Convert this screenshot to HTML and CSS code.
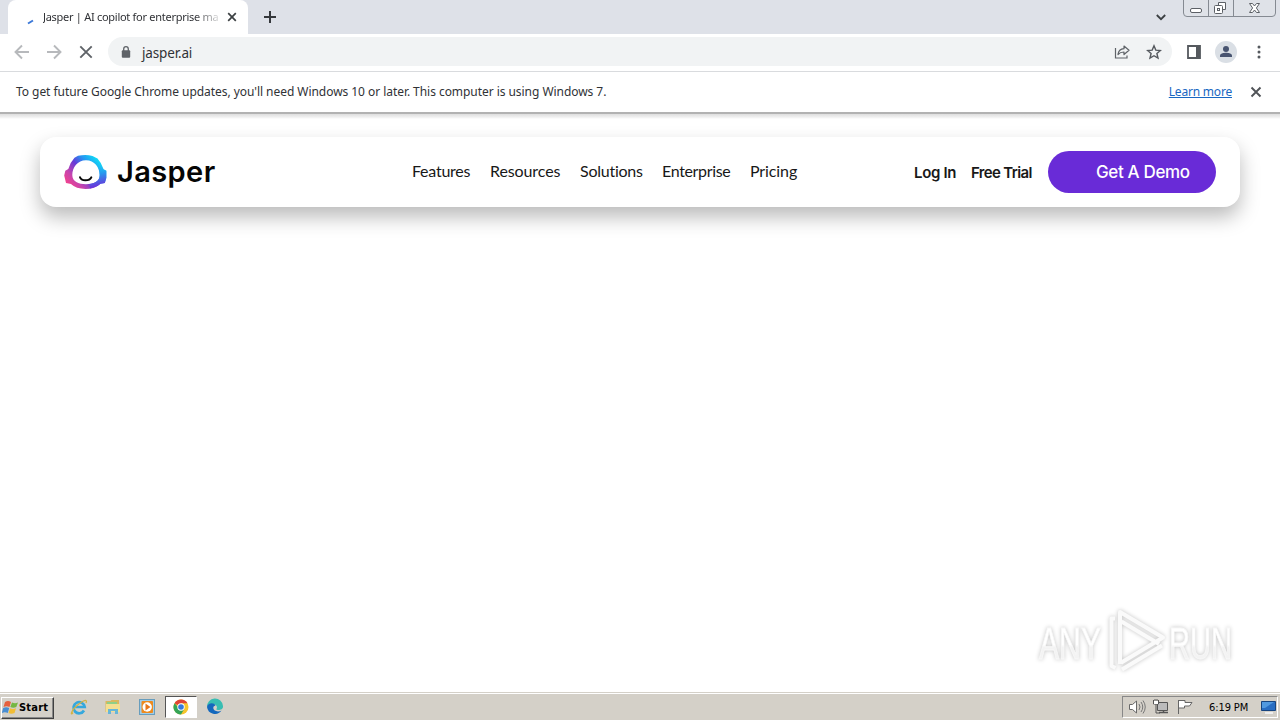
FILE: index.html
```html
<!DOCTYPE html>
<html lang="en">
<head>
<meta charset="utf-8">
<title>Jasper | AI copilot for enterprise marketing</title>
<link rel="stylesheet" href="styles.css">
</head>
<body>
<div class="desktop">
  <header class="tabstrip">
    <div class="tab">
      <svg class="spinner" width="16" height="16" viewBox="0 0 16 16"><path d="M5 9.500 10 6.500" stroke="#3b78d8" stroke-width="2" fill="none"/></svg>
      <span class="tab-title">Jasper | AI copilot for enterprise ma</span>
      <svg class="tab-close" width="10" height="10" viewBox="0 0 10 10"><path d="M1.2 1.2 8.8 8.8M8.8 1.2 1.2 8.8" stroke="#3c4043" stroke-width="1.7"/></svg>
    </div>
    <svg class="new-tab" width="12" height="12" viewBox="0 0 12 12"><path d="M6 0v12M0 6h12" stroke="#35383c" stroke-width="2"/></svg>
    <svg class="chevron" width="10" height="7" viewBox="0 0 10 7"><path d="M.8 1 5 5.2 9.2 1" fill="none" stroke="#3c4043" stroke-width="1.8"/></svg>
    <svg class="window-controls" width="94" height="18" viewBox="0 0 94 18">
      <path d="M.5 0v13q0 3.500 3.500 3.500h85q3.500 0 3.500-3.500V0M25.500 0v16.500M50.500 0v16.500" fill="#dfe2e8" stroke="#858a92"/>
      <rect x="7.500" y="8.500" width="11" height="4" rx="1.500" fill="#fff" stroke="#5c6066"/>
      <path d="M35.500 2.500h7v7h-7z" fill="#fff" stroke="#5c6066"/><rect x="31.500" y="5.500" width="8" height="8" rx="1" fill="#fff" stroke="#5c6066"/><rect x="34.500" y="8.500" width="2" height="2" fill="none" stroke="#5c6066"/>
      <path d="M66.500 3.500h3l2 2.500 2-2.500h3L73.400 8l3.100 4.500h-3l-2-2.500-2 2.500h-3L69.600 8z" fill="#fff" stroke="#5c6066"/>
    </svg>
  </header>

  <div class="toolbar">
    <svg class="tool" width="16" height="16" viewBox="0 0 16 16"><path d="M15 8H2M8 1.500 1.500 8 8 14.500" fill="none" stroke="#b7b9bc" stroke-width="1.900"/></svg>
    <svg class="tool" width="16" height="16" viewBox="0 0 16 16"><path d="M1 8h13M8 1.500 14.500 8 8 14.500" fill="none" stroke="#b7b9bc" stroke-width="1.900"/></svg>
    <svg class="tool" width="16" height="16" viewBox="0 0 16 16"><path d="M2.300 2.300 13.700 13.700M13.700 2.300 2.300 13.700" stroke="#5f6368" stroke-width="1.900"/></svg>
    <div class="omnibox">
      <svg width="10" height="12" viewBox="0 0 10 12"><rect x=".8" y="4.300" width="8.400" height="7.400" rx="1" fill="#5f6368"/><path d="M2.700 5V3a2.300 2.300 0 0 1 4.600 0v2" fill="none" stroke="#5f6368" stroke-width="1.300"/></svg>
      <span class="url">jasper.ai</span>
      <svg class="share" width="16" height="16" viewBox="0 0 16 16"><path d="M1.500 4v10h11.500v-2.500" fill="none" stroke="#5f6368" stroke-width="1.200"/><path d="M4 10.500C4.500 6.500 6.500 5 10 4.700V2l5 4.300-5 4.200V8C7.500 8 5.500 8.700 4 10.500z" fill="none" stroke="#5f6368" stroke-width="1.200" stroke-linejoin="round"/></svg>
      <svg class="star" width="16" height="16" viewBox="0 0 16 16"><path d="m8 1.800 1.800 4.300 4.600.4-3.500 3 1.100 4.600L8 11.700l-4 2.400 1.100-4.600-3.500-3 4.600-.4z" fill="none" stroke="#55595e" stroke-width="1.400"/></svg>
    </div>
    <svg class="panel-icon" width="14" height="14" viewBox="0 0 14 14"><path d="M1 1h12v12H1z" fill="#fff" stroke="#55595e" stroke-width="1.800"/><path d="M9 1h4v12H9z" fill="#55595e"/></svg>
    <svg class="avatar" width="22" height="22" viewBox="0 0 22 22"><circle cx="11" cy="11" r="11" fill="#dadfe5"/><circle cx="11" cy="8" r="3" fill="#485470"/><path d="M5 16v-1.300c0-2.200 3.500-3 6-3s6 .8 6 3V16z" fill="#485470"/></svg>
    <svg class="dots" width="4" height="14" viewBox="0 0 4 14"><g fill="#55595e"><circle cx="2" cy="2" r="1.500"/><circle cx="2" cy="7" r="1.500"/><circle cx="2" cy="12" r="1.500"/></g></svg>
  </div>

  <div class="infobar">
    <span class="notice">To get future Google Chrome updates, you'll need Windows 10 or later. This computer is using Windows 7.</span>
    <a class="learn">Learn more</a>
    <svg width="12" height="12" viewBox="0 0 12 12"><path d="M1.500 1.500 10.500 10.500M10.500 1.500 1.500 10.500" stroke="#505357" stroke-width="1.900"/></svg>
  </div>

  <main class="page">
    <nav class="navbar">
      <svg class="logo" width="44" height="36" viewBox="0 0 44 36">
        <defs><linearGradient id="halo" x1="5" y1="32" x2="34" y2="5" gradientUnits="userSpaceOnUse"><stop offset="0" stop-color="#f5428a"/><stop offset=".24" stop-color="#c844ad"/><stop offset=".53" stop-color="#643bd8"/><stop offset=".75" stop-color="#2694f2"/><stop offset="1" stop-color="#10d8f5"/></linearGradient>
        <linearGradient id="side" x1="30" y1="10" x2="34" y2="31" gradientUnits="userSpaceOnUse"><stop offset="0" stop-color="#20c5f5" stop-opacity="0"/><stop offset=".45" stop-color="#2898ee"/><stop offset="1" stop-color="#6737db"/></linearGradient></defs>
        <path fill-rule="evenodd" fill="url(#halo)" d="M14 .8Q22-.8 28.500 1l5 2.600Q37.500 8 39.500 14.200l2.800 1.600v7.200l-1.500 5-4.300.8Q31 34 21.500 34T7 29.100l-5-1L.2 20.500 1.300 15.800l3-1.700Q6 7.500 10.500 2.700zM22 5.200C13.500 5.200 8.300 12.500 8.300 20c0 6.700 6.200 9.200 13.700 9.200S35.700 26.700 35.700 20C35.700 12.500 30.500 5.200 22 5.200z"/>
        <path fill="url(#side)" d="M33.500 3.600Q37.500 8 39.500 14.200l2.800 1.600v7.200l-1.500 5-4.300.8Q33 32 26 33.500l-.5-4.500c6.700-.9 10.200-3.300 10.200-9 0-5.200-2.600-10.500-7-13.300z"/>
        <path d="M16 22.300c1.200 4 9.500 4 11.300 0" fill="none" stroke="#080808" stroke-width="2" stroke-linecap="round"/>
      </svg>
      <span class="brand">Jasper</span>
      <div class="menu"><span class="m1">Features</span><span class="m2">Resources</span><span class="m3">Solutions</span><span class="m4">Enterprise</span><span class="m5">Pricing</span></div>
      <div class="account"><span class="login">Log In</span><span class="trial">Free Trial</span></div>
      <a class="demo"><span>Get A Demo</span></a>
    </nav>
    <svg class="watermark" width="216" height="72" viewBox="0 0 216 72">
      <defs><linearGradient id="mark" x1="0" y1="0" x2="0" y2="1"><stop offset=".52" stop-color="#fff"/><stop offset=".58" stop-color="#f3f3f3"/></linearGradient></defs>
      <g class="watermark-type"><text x="7" y="54" textLength="62" lengthAdjust="spacingAndGlyphs">ANY</text><text x="137" y="54" textLength="63" lengthAdjust="spacingAndGlyphs">RUN</text></g>
      <g class="watermark-play"><path d="M83 13.500h-3.500V61l4 2"/><path d="m88 59V7l43 25.500-42 25.300M89.500 16.500 127 39M90 64.500l40-24"/></g>
    </svg>
  </main>

  <footer class="taskbar">
    <div class="start"><svg width="17" height="17" viewBox="0 0 17 17"><path d="M3 3q3-2 6 0L7.500 8q-3-1.500-6 0z" fill="#e6603d"/><path d="M10 3.500q3 1.500 6 0L14.300 8q-3 1.500-6 .1z" fill="#75b742"/><path d="M1.200 9q3-1.500 6 0L5.800 14q-3-1.500-6 0z" fill="#498ed2"/><path d="M8 9.200q3 1.500 6 0L12.500 14q-3 1.500-6 .1z" fill="#f2bd35"/></svg><span>Start</span></div>
    <div class="quick">
      <svg width="18" height="18" viewBox="0 0 18 18"><path d="M14 12.500A5.600 5.600 0 1 1 14.700 9H5" fill="none" stroke="#35a8dd" stroke-width="2.700"/><path d="M3 14.500c-3 4-2-2 4-7s11-7 9-2.500" fill="none" stroke="#d3b344" stroke-width="1.300"/></svg>
      <svg width="18" height="18" viewBox="0 0 18 18"><path d="M1.500 3h5l1-1H15v12H1.500z" fill="#d9b85e"/><path d="M3 4h10v3H3z" fill="#8fcf88"/><path d="M2 6h14v8H2z" fill="#f4df91"/><path d="M4 16v-5h10v5h-3v-3H7v3z" fill="#67b6d8"/></svg>
      <svg width="18" height="18" viewBox="0 0 18 18"><rect x="1.500" y="1.500" width="15" height="15" fill="#9fcdea" stroke="#679dbd"/><rect x="3.500" y="3" width="11.500" height="12" rx="1" fill="#ed8a1e"/><circle cx="9.200" cy="9" r="4.700" fill="#fff"/><path d="m7.500 5.500 5 3.500-5 3.500z" fill="#e8761a"/></svg>
      <div class="active"><svg width="18" height="18" viewBox="0 0 18 18"><circle cx="9" cy="9" r="7.500" fill="#f6c52c"/><path d="M9 9 2.500 5.200A7.500 7.500 0 0 1 15.500 5.200H9z" fill="#df4436"/><path d="M2.500 5.200A7.500 7.500 0 0 0 9 16.500L12.200 11 9 9H6z" fill="#34a457"/><circle cx="9" cy="9" r="3.700" fill="#fff"/><circle cx="9" cy="9" r="2.800" fill="#3579dc"/></svg></div>
      <svg width="18" height="18" viewBox="0 0 18 18"><path d="M1 9a8 8 0 0 1 16-1c.3 3-2 4-5 4-2 0-2-1-1-2 0-3-2-4-4.500-4C3.500 6 1.500 7 1 9z" fill="#38bdb2"/><path d="M1 9c.5-4 7-5 8.500-1.500C6 8 6.500 13 12 13.500q2 0 3.500-1A8 8 0 0 1 1 9z" fill="#1468bd"/></svg>
    </div>
    <div class="tray">
      <svg width="18" height="18" viewBox="0 0 18 18"><path d="M1.500 6.500h3l4-3.500v12l-4-3.500h-3z" fill="#fff" stroke="#686868"/><path d="M11 6q2 3 0 6M13 4q3.500 5 0 10M15 2.500q4.500 6.500 0 13" fill="none" stroke="#777"/></svg>
      <svg width="18" height="18" viewBox="0 0 18 18"><path d="M5.500 4.500h10v8h-10z" fill="#bbb" stroke="#555"/><path d="M7 14.500h9M11.500 13v2" stroke="#555" stroke-width="1.500"/><path d="M1.500 2v4h5V2M4 6v9h4M3 1v2M5 1v2" fill="none" stroke="#555"/><path d="M2 3h4v3H2z" fill="#fff"/></svg>
      <svg width="18" height="18" viewBox="0 0 18 18"><path d="M2.500 2v14M3 2.500h6v2h7l-2.500 3.500H8.500v2H3" fill="#fff" stroke="#666"/></svg>
      <span class="clock">6:19 PM</span>
      <svg class="show-desktop" width="16" height="16" viewBox="0 0 16 16"><path d="M1.500 2.500h14v9h-14z" fill="#286dc2" stroke="#174580"/><path d="M2 3h12L5 9H2z" fill="#5199df"/><path d="M5 14h8" stroke="#eee" stroke-width="2"/></svg>
    </div>
  </footer>
</div>
</body>
</html>
```
FILE: styles.css
```css
*{box-sizing:border-box}
body{margin:0;font-family:"Noto Sans","DejaVu Sans",sans-serif;color:#303236}
svg{display:block;flex-shrink:0}
.desktop{width:1280px;height:720px;overflow:hidden;display:grid;grid-template-columns:1280px;grid-template-rows:34px 38px 42px 578px 28px;background:#fff}
.tabstrip{display:flex;background:#dee1e8;padding-left:8px}
.tab{width:240px;background:#fff;border-radius:8px 8px 0 0;display:flex;align-items:center;padding-left:15px}
.spinner{margin-top:10px}
.tab-title{width:176px;margin:-2px 0 0 4px;white-space:nowrap;font-size:11px;letter-spacing:-.28px;-webkit-mask-image:linear-gradient(90deg,#000 86%,rgba(0,0,0,.15));mask-image:linear-gradient(90deg,#000 86%,rgba(0,0,0,.15))}
.tab-close{margin-left:8px}
.new-tab{margin:11px 0 0 16px}
.chevron{margin:14px 0 0 auto}
.window-controls{margin:0 3px 0 17px}
.toolbar{display:flex;align-items:center;padding:0 19px 2px 14px;border-bottom:1px solid #d9dbde;gap:16px}
.omnibox{flex:1;height:29px;margin-left:-2px;background:#f1f3f4;border-radius:15px;display:flex;align-items:center;padding:0 10px 0 13px}
.url{font-size:13.5px;margin:2px 0 0 11px;letter-spacing:-.15px}
.share{margin-left:auto}
.star{margin-left:16px}
.panel-icon{margin-left:-1px}
.avatar{margin-left:-2px}
.dots{margin-left:4px}
.infobar{display:flex;align-items:center;padding:0 18px 1px 16px;border-bottom:2px solid #b2b2b2;font-size:12px}
.notice{white-space:nowrap;letter-spacing:-.05px}
.learn{margin-left:auto;margin-right:18px;color:#1967c2;text-decoration:underline;letter-spacing:-.2px}
.page{padding:23px 40px 0;background:linear-gradient(#dedede 0,#efefef 3px,#fff 5px);position:relative}
.navbar{height:70px;border-radius:16px;background:#fff;box-shadow:0 10px 20px rgba(0,0,0,.27);display:flex;align-items:center;padding:0 24px;color:#181818}
.logo{margin-top:2px}
.brand{font:600 29px Inter,sans-serif;color:#050505;margin:-2px 0 0 9px;width:99px;letter-spacing:.4px}
.menu{display:flex;gap:20px;margin:-3px 0 0 196px;font:16px Lato,sans-serif;letter-spacing:-.25px;white-space:nowrap}
.m1{width:58px}.m2{width:70px;letter-spacing:-.1px}.m3{width:62px}.m4{width:68px;letter-spacing:-.35px}.m5{width:47px;letter-spacing:-.1px}
.account{display:flex;gap:15px;margin:0 0 0 117px;font:600 15px Inter,sans-serif;white-space:nowrap}
.login{width:42px;letter-spacing:-.35px}.trial{width:61px;letter-spacing:-.65px}
.demo{width:168px;height:42px;border-radius:21px;background:#692bd7;color:#fff;font:500 17px Inter,sans-serif;letter-spacing:-.35px;display:flex;align-items:center;padding-left:48px;margin-left:16px;white-space:nowrap}
.watermark{position:absolute;left:1032px;top:491px;filter:drop-shadow(0 0 2px rgba(0,0,0,.24))}
.watermark-type{font:44px "Liberation Sans",sans-serif;fill:url(#mark);stroke:#f8f8f8;stroke-width:.8}
.watermark-play{fill:none;stroke:#fafafa;stroke-width:4;stroke-linejoin:round}
.taskbar{display:flex;align-items:center;background:#d4d0c8;border-top:1px solid #d4d0c8;box-shadow:inset 0 1px #fff;padding:2px 2px 0 1px;color:#000}
.start{width:53px;height:22px;border:1px solid #fff;border-right-color:#404040;border-bottom-color:#404040;box-shadow:inset -1px -1px #888;display:flex;align-items:center;font:bold 11px "DejaVu Sans Condensed","DejaVu Sans",sans-serif;letter-spacing:.2px}
.quick{display:flex;align-items:center;margin:-1px 0 0 16px;gap:16px}
.active{width:32px;height:22px;background:#fff;border:1px solid #555;border-right-color:#fff;border-bottom-color:#fff;display:grid;place-items:center;margin:0 -7px}
.tray{margin:-1px 0 0 auto;width:156px;height:22px;border:1px solid #888;border-right-color:#fff;border-bottom-color:#fff;display:flex;align-items:center;gap:6px;padding-left:5px}
.clock{font:11px "DejaVu Sans Condensed","DejaVu Sans",sans-serif;letter-spacing:-.1px;margin-left:9px;white-space:nowrap;width:41px}
.show-desktop{margin-left:4px}
```
